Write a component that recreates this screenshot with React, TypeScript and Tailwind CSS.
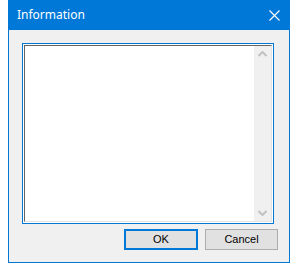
export default function App() {
    return (
        <div className="w-[293px] h-[264px] bg-white">
            <div className="ml-[8px] w-[282px] h-[263px] border border-[#0078d7] bg-[#f0f0f0] flex flex-col">
                <div className="h-[29px] bg-[#0078d7] flex items-center justify-between pl-[8px] pr-[9px] pb-[1px]">
                    <span className="text-white text-[12px] font-['Noto_Sans',sans-serif] leading-none">
                        Information
                    </span>
                    <svg width="11" height="11" viewBox="0 0 11 11" className="mt-[1px]">
                        <path d="M0.5 0.5 L10.5 10.5 M10.5 0.5 L0.5 10.5" stroke="#ffffff" strokeWidth="1.1" />
                    </svg>
                </div>
                <div className="ml-[13px] mt-[13px] w-[252px] h-[181px] border border-[#0078d7] p-[1px] bg-white">
                    <div className="h-full flex border-t border-l border-[#646464] border-r border-r-[#e3e3e3] border-b border-b-[#e3e3e3]">
                        <div className="flex-1 bg-white" />
                        <div className="w-[17px] bg-[#f0f0f0] flex flex-col items-center justify-between py-[5px]">
                            <svg width="9" height="6" viewBox="0 0 9 6">
                                <path d="M0.5 5 L4.5 1 L8.5 5" fill="none" stroke="#c1c1c1" strokeWidth="2" />
                            </svg>
                            <svg width="9" height="6" viewBox="0 0 9 6">
                                <path d="M0.5 1 L4.5 5 L8.5 1" fill="none" stroke="#c1c1c1" strokeWidth="2" />
                            </svg>
                        </div>
                    </div>
                </div>
                <div className="mt-[5px] flex justify-end gap-[7px] pr-[11px]">
                    <button
                        type="button"
                        className="w-[74px] h-[21px] border-2 border-[#0078d7] bg-[#e1e1e1] text-black text-[11px] font-['Liberation_Sans',sans-serif] leading-none flex items-center justify-center"
                    >
                        OK
                    </button>
                    <button
                        type="button"
                        className="w-[73px] h-[21px] border border-[#adadad] bg-[#e1e1e1] text-black text-[11px] font-['Liberation_Sans',sans-serif] leading-none flex items-center justify-center"
                    >
                        Cancel
                    </button>
                </div>
            </div>
        </div>
    );
}
